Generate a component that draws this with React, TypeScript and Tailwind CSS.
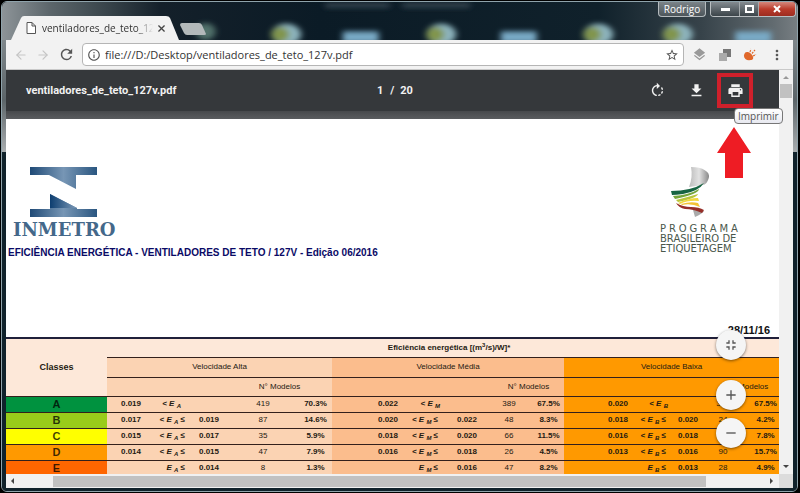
import React from "react";
import { ArrowLeft, ArrowRight } from "lucide-react";
import { MdRefresh, MdInfoOutline, MdStarBorder, MdMoreVert, MdRotateRight, MdFileDownload, MdPrint, MdFullscreenExit, MdAdd, MdRemove, MdLayers } from "react-icons/md";

const ui = "font-['Open_Sans','Noto_Sans',sans-serif]";

type Band = { v1: string; op: boolean; v2: string; n: string; pct: string };
type Row = { letter: string; color: string; bands: Band[] };

const b = (v1: string, v2: string, n: string, pct: string): Band => ({ v1, op: v1 !== "", v2, n, pct });

const rows: Row[] = [
  { letter: "A", color: "bg-[#00923f]", bands: [b("0.019", "", "419", "70.3%"), b("0.022", "", "389", "67.5%"), b("0.020", "", "389", "67.5%")] },
  { letter: "B", color: "bg-[#99cc1a]", bands: [b("0.017", "0.019", "87", "14.6%"), b("0.020", "0.022", "48", "8.3%"), b("0.018", "0.020", "24", "4.2%")] },
  { letter: "C", color: "bg-[#ffff00]", bands: [b("0.015", "0.017", "35", "5.9%"), b("0.018", "0.020", "66", "11.5%"), b("0.016", "0.018", "45", "7.8%")] },
  { letter: "D", color: "bg-[#ff9900]", bands: [b("0.014", "0.015", "47", "7.9%"), b("0.016", "0.018", "26", "4.5%"), b("0.013", "0.016", "90", "15.7%")] },
  { letter: "E", color: "bg-[#ff6600]", bands: [b("", "0.014", "8", "1.3%"), b("", "0.016", "47", "8.2%"), b("", "0.013", "28", "4.9%")] },
];

const bandColors = ["bg-[#fbd3b3]", "bg-[#fbbd8d]", "bg-[#ff9900]"];
const subs = ["A", "M", "B"];
const line = "border-b border-[#33201c]";

function Desktop() {
  const orbs = [286, 442, 600, 680];
  const tiles = [343, 502, 738];
  return (
    <svg className="absolute inset-0 h-full w-full" viewBox="0 0 800 40" preserveAspectRatio="none" aria-hidden="true">
      <defs>
        <linearGradient id="sky" x1="0" x2="1">
          <stop offset="0" stopColor="#8d9498" />
          <stop offset="0.06" stopColor="#5c666b" />
          <stop offset="0.13" stopColor="#39454b" />
          <stop offset="0.2" stopColor="#14202a" />
          <stop offset="0.4" stopColor="#0b1b26" />
          <stop offset="0.75" stopColor="#10212b" />
          <stop offset="0.88" stopColor="#37434a" />
          <stop offset="0.97" stopColor="#626b70" />
          <stop offset="1" stopColor="#777e82" />
        </linearGradient>
        <filter id="soft" x="-50%" y="-50%" width="200%" height="200%"><feGaussianBlur stdDeviation="3" /></filter>
      </defs>
      <rect width="800" height="40" fill="url(#sky)" />
      <g filter="url(#soft)">
        <ellipse cx="205" cy="31" rx="10" ry="9" fill="#51716a" />
        {orbs.map((x) => (
          <g key={x}>
            <ellipse cx={x} cy="34" rx="15" ry="11" fill="#8db4bd" />
            <ellipse cx={x - 6} cy="34" rx="9" ry="8" fill="#81954d" />
          </g>
        ))}
        {tiles.map((x) => <rect key={x} x={x} y="31" width="36" height="12" fill="#79aac6" />)}
        <rect x="325" y="1" width="65" height="5" fill="#36454f" />
        <rect x="403" y="1" width="68" height="5" fill="#36454f" />
      </g>
    </svg>
  );
}

function TitleBar() {
  return (
    <header className="relative flex h-[38px] shrink-0 items-end bg-[#12222c]">
      <Desktop />
      <div className="relative ml-[9px] flex h-6 w-[168px] items-center pl-[15px] pr-3">
        <svg className="absolute inset-0 h-full w-full" viewBox="0 0 168 24" preserveAspectRatio="none" aria-hidden="true">
          <path d="M0 24 L10 2 Q11 0 13 0 H155 Q158 0 159 2 L168 24Z" fill="#f2f2f2" />
        </svg>
        <svg className="relative h-3 w-[10px] shrink-0" viewBox="0 0 10 12" fill="#fff" stroke="#555" aria-hidden="true">
          <path d="M1 .5H6L9.500 4V11.500H1ZM6 .5V4H9.500" />
        </svg>
        <span className={`${ui} relative ml-1 min-w-0 flex-1 overflow-hidden whitespace-nowrap pl-0.5 text-[10px] leading-4 text-[#333] [mask-image:linear-gradient(to_right,black_85%,transparent)]`}>ventiladores_de_teto_127v.pdf</span>
        <button aria-label="Fechar guia" className="relative ml-0.5 flex h-3 w-3 items-center justify-center">
          <svg viewBox="0 0 8 8" className="h-[7px] w-[7px]" stroke="#444" strokeWidth="1.500"><path d="M.5 .5 7.500 7.500M7.500 .5 .5 7.500" /></svg>
        </button>
      </div>
      <button aria-label="Nova guia" className="relative mb-1 h-[14px] w-7">
        <svg viewBox="0 0 28 14" className="h-full w-full"><path d="M3 1H20Q22 1 23 3L27 12Q27 13 25 13H8Q6 13 5 11L1 3Q1 1 3 1Z" fill="#b3b9ba" /></svg>
      </button>
      <div className="relative mr-px flex flex-1 items-start justify-end gap-1 self-start">
        <button className={`${ui} h-[15px] w-12 rounded-b border border-t-0 border-[#b5bbbe] bg-gradient-to-b from-[#7b8388] to-[#4d565b] text-[10px] leading-[14px] text-white`}>Rodrigo</button>
        <div className="flex h-[15px] overflow-hidden rounded-b border border-t-0 border-[#b9bec1]">
          <button aria-label="Minimizar" className="flex w-7 items-center justify-center bg-gradient-to-b from-[#848b90] to-[#3c454a]"><span className="h-[3px] w-[9px] bg-white" /></button>
          <button aria-label="Maximizar" className="flex w-5 items-center justify-center border-x border-[#a4aaad] bg-gradient-to-b from-[#848b90] to-[#3c454a]"><span className="h-2 w-[9px] border-2 border-white" /></button>
          <button aria-label="Fechar" className="flex w-9 items-center justify-center bg-gradient-to-b from-[#d4877c] via-[#bb3b2b] to-[#9d2c20]">
            <svg viewBox="0 0 8 8" className="h-2 w-2" stroke="#fff" strokeWidth="2"><path d="M1 1 7 7M7 1 1 7" /></svg>
          </button>
        </div>
      </div>
    </header>
  );
}

function AddressBar() {
  return (
    <nav className="flex h-[30px] shrink-0 items-center border-b border-[#c9c9c9] bg-[#f2f2f2] px-2 text-[#555]">
      <button aria-label="Voltar" className="mr-2 text-[#c5c5c5]"><ArrowLeft size={14} strokeWidth={2} /></button>
      <button aria-label="Avançar" className="mr-2 text-[#c5c5c5]"><ArrowRight size={14} strokeWidth={2} /></button>
      <button aria-label="Recarregar" className="mr-[7px]"><MdRefresh size={17} /></button>
      <div className="flex h-[23px] min-w-0 flex-1 items-center rounded-sm border border-[#b5b5b5] bg-white px-1">
        <MdInfoOutline size={14} />
        <input aria-label="Endereço" defaultValue="file:///D:/Desktop/ventiladores_de_teto_127v.pdf" className={`${ui} ml-1 min-w-0 flex-1 bg-transparent text-[11px] leading-4 text-[#333] outline-none`} />
        <button aria-label="Favorito"><MdStarBorder size={14} /></button>
      </div>
      <div className="ml-2 flex items-center gap-3">
        <button aria-label="Camadas" className="text-[#999]"><MdLayers size={15} /></button>
        <button aria-label="Cópias">
          <svg className="h-3 w-3" viewBox="0 0 12 12"><path d="M4 0H12V8H4Z" fill="#777" /><path d="M0 4H8V12H0Z" fill="#aaa" /></svg>
        </button>
        <button aria-label="Extensão">
          <svg className="h-[14px] w-[14px]" viewBox="0 0 14 14" fill="none" stroke="#e0682b">
            <path d="M2.500 4.500 9.500 11A5 4.500 0 1 1 2.500 4.500Z" fill="#e0682b" stroke="none" />
            <ellipse cx="6" cy="8" rx="5" ry="3" transform="rotate(42 6 8)" fill="#e0682b" stroke="none" />
            <path d="M7 4 8 1M9 5.500 12 2M10 8 13 6.500" strokeWidth="1.200" strokeDasharray="2 1" />
          </svg>
        </button>
        <button aria-label="Menu"><MdMoreVert size={16} /></button>
      </div>
    </nav>
  );
}

function PdfToolbar() {
  return (
    <div className="flex h-[41px] shrink-0 items-center bg-[#35383b] font-[Roboto,sans-serif] text-[11px] font-bold leading-4 text-[#f1f1f1]">
      <span className="flex-1 pl-5">ventiladores_de_teto_127v.pdf</span>
      <div className="flex items-center gap-1.5 pl-2.5">
        <input aria-label="Página" defaultValue="1" className="w-2 bg-transparent text-center outline-none" />
        <span>/</span>
        <span>20</span>
      </div>
      <div className="flex flex-1 items-center justify-end pr-[26px]">
        <button aria-label="Girar" className="mr-[22px]"><MdRotateRight size={17} /></button>
        <button aria-label="Baixar" className="mr-3"><MdFileDownload size={17} /></button>
        <div className="relative">
          <button aria-label="Imprimir" className="flex h-[35px] w-9 items-center justify-center border-4 border-[#d0202b]"><MdPrint size={17} /></button>
          <span role="tooltip" className={`${ui} absolute left-[17px] top-full z-10 rounded-sm border border-[#777] bg-gradient-to-b from-white to-[#e8e9f0] px-[3px] text-[10px] font-normal leading-[14px] text-[#555]`}>Imprimir</span>
          <svg className="absolute left-0 top-[54px] z-10 h-[51px] w-[34px]" viewBox="0 0 34 51" aria-hidden="true"><path d="M17 0 34 26H26V51H8V26H0Z" fill="#ee1c24" /></svg>
        </div>
      </div>
    </div>
  );
}

function Inmetro() {
  return (
    <svg className="h-[72px] w-[108px]" viewBox="0 0 108 72" role="img" aria-label="Inmetro">
      <defs>
        <linearGradient id="bar" x1="0" x2="1"><stop offset="0" stopColor="#1f4a76" /><stop offset=".5" stopColor="#7796b5" /><stop offset="1" stopColor="#2a5680" /></linearGradient>
        <linearGradient id="wedge" x1="0" x2="1"><stop offset="0" stopColor="#0d3e70" /><stop offset="1" stopColor="#7d9ab8" /></linearGradient>
      </defs>
      <path d="M17 0H84V8H63V22L36 8H17Z" fill="url(#bar)" />
      <path d="M37 27 64 41V42H84V50H17V42H37Z" fill="url(#bar)" />
      <path d="M37 27 64 41H37Z" fill="url(#wedge)" />
      <text x="0" y="69" className="fill-[#44688a] font-['DejaVu_Serif',serif] text-[18px] font-bold">INMETRO</text>
    </svg>
  );
}

function Programa() {
  return (
    <div className="w-[78px] font-['DejaVu_Sans',sans-serif] text-[10px] leading-[10px] text-[#4a584c]">
      <svg className="ml-[11px] h-[50px] w-10" viewBox="0 0 40 50" aria-hidden="true">
        <defs><linearGradient id="silver" x1="0" x2="1"><stop offset="0" stopColor="#bbb" /><stop offset=".5" stopColor="#e2e2e2" /><stop offset="1" stopColor="#888" /></linearGradient></defs>
        <path d="M20 0C32 0 39 5 38 10C37 15 34 18 32 18L18 20Q22 10 20 0Z" fill="url(#silver)" />
        <path d="M22 43 33 44Q31 47 24 50Z" fill="#aaa" />
        <path d="M0 24Q20 24 33 16Q28 24 12 27Q5 28 1 28Z" fill="#176442" />
        <path d="M2 29Q18 28 28 22Q28 27 4 32Z" fill="#75a53b" />
        <path d="M5 33Q17 30 27 27Q26 31 7 35Z" fill="#b9c53a" />
        <path d="M7 36Q18 31 27 31L28 34Q17 33 9 37Z" fill="#f1d83d" />
        <path d="M10 37Q20 34 27 36L29 40Q20 36 11 38Z" fill="#f3c233" />
        <path d="M5 36Q12 40 20 40Q28 40 33 43L31 46Q22 42 14 42Q8 41 5 36Z" fill="#962e28" />
      </svg>
      <div className="flex justify-between pt-[7px]"><span>P</span><span>R</span><span>O</span><span>G</span><span>R</span><span>A</span><span>M</span><span>A</span></div>
      <div className="whitespace-nowrap">BRASILEIRO DE</div>
      <div className="whitespace-nowrap">ETIQUETAGEM</div>
    </div>
  );
}

function EfficiencyTable() {
  return (
    <table className="w-full table-fixed border-collapse whitespace-nowrap border-t-2 border-[#20203a] text-center text-[8px] leading-[10px] text-[#241a12]">
      <colgroup>
        <col className="w-[101px]" />
        <col className="w-[36px]" /><col className="w-[46px]" /><col className="w-[38px]" /><col className="w-[72px]" /><col className="w-[33px]" />
        <col className="w-[68px]" /><col className="w-[42px]" /><col className="w-[43px]" /><col className="w-[48px]" /><col className="w-[31px]" />
        <col className="w-[66px]" /><col className="w-[40px]" /><col className="w-[30px]" /><col className="w-[46px]" /><col className="w-[33px]" />
      </colgroup>
      <thead>
        <tr className="h-[19px] bg-[#fde8d9]">
          <th rowSpan={3} scope="col" className={`${line} text-[9px]`}>Classes</th>
          <th colSpan={15} scope="colgroup" className={`${line} pl-3`}>Eficiência energética [(m<sup className="text-[6px] leading-none">3</sup>/s)/W]*</th>
        </tr>
        <tr className="h-5">
          {["Velocidade Alta", "Velocidade Média", "Velocidade Baixa"].map((t, i) => (
            <th key={t} colSpan={5} scope="colgroup" className={`${line} ${bandColors[i]} font-normal`}>{t}</th>
          ))}
        </tr>
        <tr className="h-[19px]">
          {bandColors.map((c, i) => (
            <React.Fragment key={c}>
              <td colSpan={3} className={`${line} ${c}`} />
              <th colSpan={2} scope="col" className={`${line} ${c} font-normal ${["", "pl-2", "pl-4"][i]}`}>N° Modelos</th>
            </React.Fragment>
          ))}
        </tr>
      </thead>
      <tbody>
        {rows.map((r) => (
          <tr key={r.letter} className="h-4 font-bold">
            <th scope="row" className={`${line} ${r.color} text-[11px] text-black/75`}>{r.letter}</th>
            {r.bands.map((x, i) => (
              <React.Fragment key={i}>
                <td className={`${line} ${bandColors[i]} pr-0.5 text-right`}>{x.v1}</td>
                <td className={`${line} ${bandColors[i]} ${x.v2 || i === 0 ? "pr-1" : "pr-0.5"} text-right italic`}>
                  <span className={!x.v2 && i === 0 ? "pr-1" : ""}>{x.op && "< "}E <sub className="text-[6px] leading-none">{subs[i]}</sub>{x.v2 && " ≤"}</span>
                </td>
                <td className={`${line} ${bandColors[i]} ${i === 2 ? "pr-0.5" : "pr-2"} text-right`}>{x.v2}</td>
                <td className={`${line} ${bandColors[i]} font-normal`}>{x.n}</td>
                <td className={`${line} ${bandColors[i]} ${i === 2 ? "pl-1.5" : ""}`}>{x.pct}</td>
              </React.Fragment>
            ))}
          </tr>
        ))}
      </tbody>
    </table>
  );
}

const fab = "flex h-[30px] w-[30px] items-center justify-center rounded-full bg-[#f5f5f5] text-[#555] shadow-[0_1px_3px_rgba(0,0,0,0.5)]";

export default function App() {
  return (
    <div className="h-screen overflow-hidden bg-black pb-px pl-px pr-0.5 pt-px font-['Liberation_Sans',Arial,sans-serif]">
      <div className="flex h-full flex-col overflow-hidden rounded-md border border-[#8fa3ab]">
        <TitleBar />
        <div className="flex min-h-0 flex-1 flex-col bg-[linear-gradient(to_bottom,#7f878b_0,#5c6569_60px,#a9adaf_112px,#10222b_112px)] px-1 pb-[3px]">
          <AddressBar />
          <div className="flex min-h-0 flex-1">
            <main className="relative z-10 flex min-w-0 flex-1 flex-col bg-white">
              <PdfToolbar />
              <div className="h-2 shrink-0 bg-gradient-to-b from-[#47494c] to-[#5a5c5f]" />
              <div className="flex items-start justify-between pr-[41px] pt-12">
                <div>
                  <div className="pl-[7px]"><Inmetro /></div>
                  <h1 className="mt-1.5 whitespace-nowrap pl-0.5 text-[10px] font-bold leading-4 text-[#0a0a66]">EFICIÊNCIA ENERGÉTICA - VENTILADORES DE TETO / 127V - Edição 06/2016</h1>
                </div>
                <Programa />
              </div>
              <p className="mt-auto pr-[9px] text-right text-[11px] font-bold leading-[14px] text-[#111]">28/11/16</p>
              <div className="h-[137px] shrink-0 overflow-hidden"><EfficiencyTable /></div>
              <div className="absolute bottom-[26px] right-[33px] flex flex-col">
                <button aria-label="Ajustar" className={fab}><MdFullscreenExit size={16} /></button>
                <button aria-label="Ampliar" className={`${fab} mt-5`}><MdAdd size={16} /></button>
                <button aria-label="Reduzir" className={`${fab} mt-2`}><MdRemove size={16} /></button>
              </div>
            </main>
            <div className="flex w-[14px] flex-col items-center bg-[#f1f1f1]">
              <svg className="h-[14px] w-2" viewBox="0 0 8 14"><path d="M1 9 4 6 7 9Z" fill="#999" /></svg>
              <div className="h-[14px] w-3 bg-[#c1c1c1]" />
              <svg className="mt-auto h-[14px] w-2" viewBox="0 0 8 14"><path d="M1 5 4 8 7 5Z" fill="#444" /></svg>
            </div>
          </div>
          <div className="flex h-[14px] shrink-0 bg-[#f1f1f1]">
            <div className="flex min-w-0 flex-1 items-center">
              <svg className="h-2 w-[47px]" viewBox="0 0 47 8"><path d="M8 1 5 4 8 7Z" fill="#444" /></svg>
              <div className="h-[11px] flex-1 bg-[#c1c1c1]" />
              <svg className="h-2 w-[73px]" viewBox="0 0 73 8"><path d="M64 1 67 4 64 7Z" fill="#444" /></svg>
            </div>
            <div className="w-[14px] bg-[#dcdcdc]" />
          </div>
        </div>
      </div>
    </div>
  );
}
